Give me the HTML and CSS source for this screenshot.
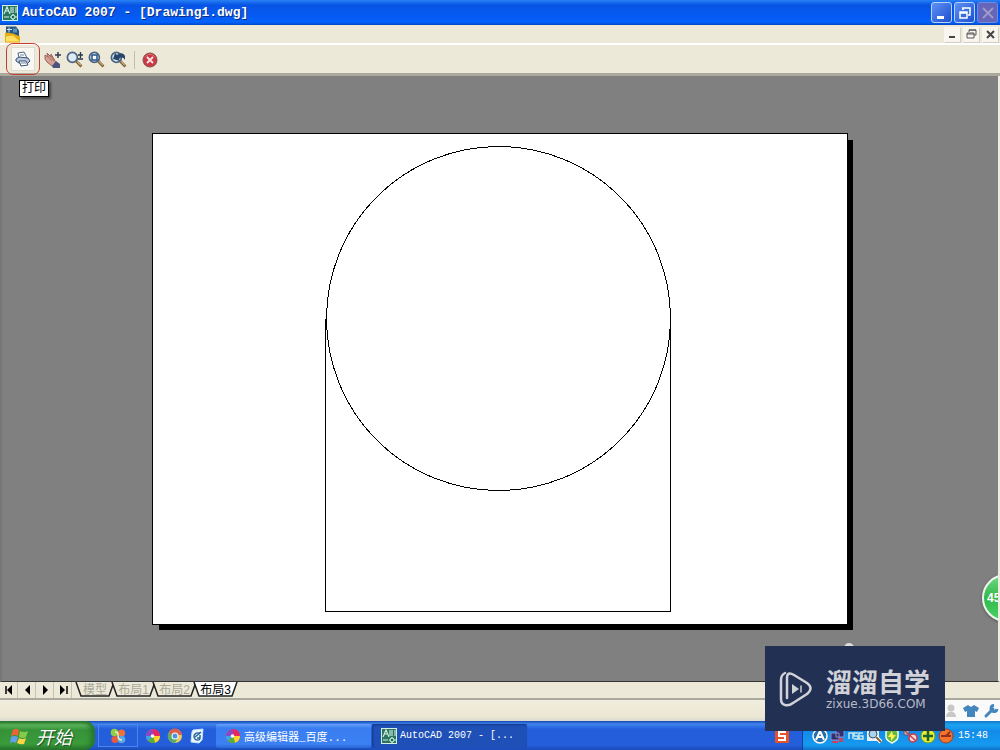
FILE: index.html
```html
<!DOCTYPE html>
<html lang="zh-CN">
<head>
<meta charset="utf-8">
<title>AutoCAD 2007 - [Drawing1.dwg]</title>
<link rel="stylesheet" href="styles.css">
</head>
<body>
<svg class="defs" aria-hidden="true">
  <symbol id="cad" viewBox="0 0 16 16"><path fill="#d3efe0" d="M0 0h16v16H0z"/><path fill="#2b7560" d="M1 1h14v14H1z"/><path d="M2 9 5 2l3 7M3 6h4M9 2v6M11 2v6M14 2v6M2 12h5M8 12h7M11 9v6" fill="none" stroke="#d2efe2" stroke-width="1.1"/><circle cx="11" cy="12" r="2" fill="#17694f" stroke="#e0fff0"/></symbol>
  <symbol id="lens" viewBox="0 0 16 16"><path d="m9.500 9.500 5 5" stroke="#785c32" stroke-width="2.600"/><path d="m9.500 9 4.500 4.500" stroke="#d4b584"/><circle cx="6" cy="6" r="4.700" fill="#dcebf4" stroke="#4a6480" stroke-width="1.600"/></symbol>
  <symbol id="pinwheel" viewBox="0 0 16 16"><circle cx="8" cy="8" r="7" fill="#f05a28"/><path fill="#8a48c8" d="M8 8 1 8A7 7 0 0 1 8 1Z"/><path fill="#e82762" d="M8 8V1a7 7 0 0 1 7 7Z"/><path fill="#ffd329" d="M8 8h7a7 7 0 0 1-5 6.700Z"/><path fill="#4cb33f" d="m8 8 2 6.700A7 7 0 0 1 3 13Z"/><path fill="#39a5eb" d="m8 8-5 5a7 7 0 0 1-2-5Z"/><circle cx="7.500" cy="8" r="1.800" fill="#fff"/></symbol>
</svg>
<div class="window">
  <header class="titlebar">
    <svg class="i16"><use href="#cad"/></svg>
    <h1 class="title">AutoCAD 2007 - [Drawing1.dwg]</h1>
    <div class="winbtns">
      <button class="winbtn" aria-label="最小化"><svg class="i16" viewBox="0 0 16 16"><path fill="#fff" d="M3 11h7v3H3z"/></svg></button>
      <button class="winbtn" aria-label="还原"><svg class="i16" viewBox="0 0 16 16"><path d="M6 5V3h7v7h-2M5 3h8" fill="none" stroke="#fff" stroke-width="1.500"/><path d="M3 7h7v6H3zM3 8h7" fill="none" stroke="#fff" stroke-width="1.500"/></svg></button>
      <button class="winbtn off" aria-label="关闭" disabled><svg class="i16" viewBox="0 0 16 16"><path d="m3 3 10 10M13 3 3 13" stroke="#a39ac5" stroke-width="1.800"/></svg></button>
    </div>
  </header>
  <div class="menubar">
    <svg class="doc" viewBox="0 0 16 16"><path fill="#29557e" d="M1 0h10l3 4v8H1z"/><path d="M2 3h5M4 1v5" stroke="#cfe5f5"/><path fill="#5b95bd" d="M8 2h4v4H8z"/><path fill="#e8ae12" d="m0 6 8 1 7 3v6H0z"/><path fill="#ffe062" d="m1 10 7-1 7 6H1z"/></svg>
    <div class="mdibtns">
      <button class="mdibtn" aria-label="最小化文档"><svg class="i12" viewBox="0 0 12 12"><path fill="#444" d="M3 8h6v2H3z"/></svg></button>
      <button class="mdibtn" aria-label="还原文档"><svg class="i12" viewBox="0 0 12 12"><path d="M4 4V2h7v5H9M4 2h7M2 5h7v5H2zM2 6h7" fill="none" stroke="#555"/></svg></button>
      <button class="mdibtn" aria-label="关闭文档"><svg class="i12" viewBox="0 0 12 12"><path d="m3 3 7 7M10 3 3 10" stroke="#444" stroke-width="2"/></svg></button>
    </div>
  </div>
  <div class="toolbar">
    <div class="marked">
      <button class="tool print" aria-describedby="tip"><svg class="i16" viewBox="0 0 16 16"><path d="m4 7-1-5 6-1 3 6" fill="#fff" stroke="#536686"/><path d="m1 8 3-2 9 1 2 3-3 3-8-1-3-2z" fill="#b9c8dc" stroke="#394f75"/><path d="M4 10h7l2 4-7 1z" fill="#fff" stroke="#394f75"/><path d="M5 4h4M6 12h5" stroke="#6d82a1"/></svg></button>
      <span class="tip" id="tip" role="tooltip">打印</span>
    </div>
    <div class="tools">
      <button class="tool" aria-label="平移"><svg class="i18" viewBox="0 0 18 18"><path d="m1 4 3 2-1-4 4 4V3l3 5 2 4-4 3-5-4-2-3z" fill="#d9a092" stroke="#98675f"/><path d="m3 4 5 6M6 4l4 6" stroke="#a97167"/><path fill="#4c5580" d="m12 10 4 3v4H9l-1-2z"/><path d="M11 4h6M14 1v6" stroke="#343b50" stroke-width="1.500"/></svg></button>
      <button class="tool" aria-label="缩放"><svg class="i18" viewBox="0 0 18 18"><use href="#lens" width="17" height="17"/><path d="M12 4h5M14.500 1v6M12 8h5" stroke="#26364b" stroke-width="1.300"/></svg></button>
      <button class="tool" aria-label="窗口缩放"><svg class="i18" viewBox="0 0 18 18"><use href="#lens" width="17" height="17"/><path d="M4 4h5v5H4z" fill="#fff" stroke="#24548b" stroke-width="1.500"/></svg></button>
      <button class="tool" aria-label="缩放为原窗口"><svg class="i18" viewBox="0 0 18 18"><use href="#lens" width="17" height="17"/><path d="m3 8 2-6 2 2c3-3 7-2 8 1v4c-2-3-4-3-6-1l1 2z" fill="#28476d"/></svg></button>
      <span class="sep"></span>
      <button class="tool" aria-label="关闭预览"><svg class="i16" viewBox="0 0 16 16"><circle cx="8" cy="8" r="7" fill="#c83b46" stroke="#8e4a4c"/><path d="M3 5a6 6 0 0 1 10 0" fill="none" stroke="#dc6b73"/><path d="m5 5 6 6m0-6-6 6" stroke="#fbe3e3" stroke-width="1.800"/></svg></button>
    </div>
  </div>
  <main class="canvas">
    <svg class="paper" viewBox="0 0 694 490" role="img" aria-label="图纸预览"><g fill="none" stroke="#000" stroke-width="1"><circle cx="345.500" cy="184.500" r="172"/><path d="M172.500 185V477.500H517.500V185"/></g></svg>
    <div class="ball">45</div>
    <svg class="peek" viewBox="0 0 26 8"><circle cx="6" cy="7" r="5" fill="#ddd"/><path d="M16 6h6" stroke="#aaa"/></svg>
  </main>
  <nav class="tabs">
    <div class="arrows">
      <button class="arrow" aria-label="第一个"><svg class="i12" viewBox="0 0 12 12"><path d="M3 2v8" stroke="#000" stroke-width="1.500"/><path d="M9 1v10L4 6z"/></svg></button>
      <button class="arrow" aria-label="上一个"><svg class="i12" viewBox="0 0 12 12"><path d="M9 1v10L4 6z"/></svg></button>
      <button class="arrow" aria-label="下一个"><svg class="i12" viewBox="0 0 12 12"><path d="M4 1v10l5-5z"/></svg></button>
      <button class="arrow" aria-label="最后一个"><svg class="i12" viewBox="0 0 12 12"><path d="M3 1v10l5-5z"/><path d="M10 2v8" stroke="#000" stroke-width="1.500"/></svg></button>
    </div>
    <button class="tab short"><svg class="shape" viewBox="0 0 40 15" preserveAspectRatio="none"><path d="m1 0 5 14h28l5-14"/></svg><span>模型</span></button>
    <button class="tab"><svg class="shape" viewBox="0 0 45 15" preserveAspectRatio="none"><path d="m1 0 5 14h33l5-14"/></svg><span>布局1</span></button>
    <button class="tab"><svg class="shape" viewBox="0 0 45 15" preserveAspectRatio="none"><path d="m1 0 5 14h33l5-14"/></svg><span>布局2</span></button>
    <button class="tab active"><svg class="shape" viewBox="0 0 45 15" preserveAspectRatio="none"><path d="m1 0 5 14h33l5-14"/></svg><span>布局3</span></button>
  </nav>
  <div class="status">
    <div class="ime">
      <svg class="i16" viewBox="0 0 16 16"><circle cx="8" cy="5" r="3.500" fill="#c8c8c8"/><path fill="#c8c8c8" d="M3 14c0-7 10-7 10 0z"/></svg>
      <svg class="i16" viewBox="0 0 16 16"><path fill="#4286bd" d="m5 2 3 2 3-2 5 3-2 4-2-1v6H4V8L2 9 0 5z"/></svg>
      <svg class="i16" viewBox="0 0 16 16"><path d="m3 13 7-7" stroke="#4286bd" stroke-width="3" stroke-linecap="round"/><path fill="none" stroke="#4286bd" stroke-width="3" d="M11 2.500a3 3 0 1 0 3 3.500"/></svg>
    </div>
  </div>
  <footer class="taskbar">
    <button class="start"><svg class="i20" viewBox="0 0 20 20"><path fill="#f06432" d="M3 4q3-2 6 0L8 10q-3-2-7 0z"/><path fill="#85cb4a" d="M10 5q4 2 8 0l-2 6q-3 2-7 0z"/><path fill="#63a0ee" d="M1 11q3-2 7 0l-2 6q-3-2-6 0z"/><path fill="#fbd345" d="M9 12q3 2 7 0l-2 6q-3 1-7-1z"/></svg><span>开始</span></button>
    <button class="pinned" aria-label="快捷程序"><svg class="i16" viewBox="0 0 16 16"><circle cx="4.500" cy="4.500" r="3.800" fill="#8fcd48"/><circle cx="11.500" cy="5" r="3.600" fill="#f0703a"/><circle cx="5" cy="11.500" r="3.600" fill="#e95842"/><circle cx="11.500" cy="11.500" r="3.800" fill="#57a8e8"/><path d="M5 4q4 0 3 4 0 4 4 4" fill="none" stroke="#f4edb0" stroke-width="1.500"/></svg></button>
    <div class="quick">
      <button class="plain" aria-label="浏览器"><svg class="i16"><use href="#pinwheel"/></svg></button>
      <button class="plain" aria-label="Chrome"><svg class="i16" viewBox="0 0 16 16"><circle cx="8" cy="8" r="7" fill="#e8cb68"/><path fill="#d9604f" d="M2 4a7 7 0 0 1 13 3H8L5 10z"/><path fill="#5bab68" d="M2 4a7 7 0 0 0 6 11l3-5H6z"/><circle cx="8" cy="8" r="3.500" fill="#fff"/><circle cx="8" cy="8" r="2.500" fill="#5191d5"/></svg></button>
      <button class="plain" aria-label="显示桌面"><svg class="i16" viewBox="0 0 16 16"><path d="m4 2 10-1-1 11-3 3-8-1 1-10z" fill="#eef7ff" stroke="#c4e3f7"/><path d="M11 6a3.500 3.500 0 1 0 0 5M6 9l6-5M8 10h3V7" fill="none" stroke="#28659a" stroke-width="1.500"/></svg></button>
    </div>
    <button class="task"><svg class="i16"><use href="#pinwheel"/></svg><span class="cjk">高级编辑器_百度...</span></button>
    <button class="task current"><svg class="i16"><use href="#cad"/></svg><span>AutoCAD 2007 - [...</span></button>
    <div class="lang"><svg class="i16" viewBox="0 0 16 16"><rect x="1" y="1" width="14" height="14" rx="1" fill="#e4532c"/><path d="M12 4H5v4h6v4H4" fill="none" stroke="#fff" stroke-width="2"/></svg></div>
    <div class="tray">
      <svg class="i16" viewBox="0 0 16 16"><circle cx="8" cy="8" r="7" fill="#286eac" stroke="#fff" stroke-width="1.500"/><path d="m4 12 4-9 4 9M5 9h6" fill="none" stroke="#fff" stroke-width="2"/></svg>
      <svg class="i16" viewBox="0 0 16 16"><path fill="#322f70" stroke="#8990c9" d="M6 1h8v8H6zM1 5h8v7H1z"/><path fill="#c9435e" d="M9 10h4v4H9zM2 13h6v2H2z"/></svg>
      <svg class="i16" viewBox="0 0 16 16"><path d="M1 11V5h4v6M6 11h4V8H6V5h4M15 5h-4v6h4V8h-3" fill="none" stroke="#c4e6ee" stroke-width="1.500"/></svg>
      <svg class="i16" viewBox="0 0 16 16"><path fill="#e9eff2" d="M1 2h12v11H1z"/><circle cx="7" cy="6" r="4" fill="#a9d4ef" stroke="#30566b"/><path d="m10 9 5 5" stroke="#fff" stroke-width="4"/><path d="m10 9 5 5" stroke="#8c6033" stroke-width="2"/></svg>
      <svg class="i16" viewBox="0 0 16 16"><path d="M8 1 14 3v6c0 3-6 6-6 6S2 12 2 9V3z" fill="#61b942" stroke="#effbe8" stroke-width="1.500"/><path fill="#ffef4f" d="M8 3 4 9h3v4l5-6H9z"/></svg>
      <svg class="i16" viewBox="0 0 16 16"><path d="M2 2h5v5H2zM8 8h5v5H8z" fill="#b1bacb" stroke="#585d7e"/><circle cx="11" cy="10" r="4" fill="#f5d8d6" stroke="#cb3945" stroke-width="1.500"/><path d="m3 3 11 10" stroke="#cb3945" stroke-width="1.500"/></svg>
      <svg class="i16" viewBox="0 0 16 16"><circle cx="8" cy="8" r="7" fill="#edea31" stroke="#65a52a"/><path d="M8 3v10M3 8h10" stroke="#176333" stroke-width="2.500"/></svg>
      <svg class="i16" viewBox="0 0 16 16"><circle cx="8" cy="8" r="7" fill="#f4742c" stroke="#9c3e25"/><path d="M8 8l4-4M3 8h10" fill="none" stroke="#902d1d" stroke-width="1.800"/></svg>
      <time class="clock">15:48</time>
    </div>
  </footer>
  <aside class="brand">
    <svg class="logo" viewBox="0 0 34 36"><g fill="none" stroke="#d0d2d7" stroke-linejoin="round" stroke-linecap="round"><path stroke-width="2.500" d="M8 27V7q0-7 7-3l13 8q7 5 0 11l-14 9q-4 3-8 2-4-1-4-6V9q0-5 4-7"/><path stroke-width="1.500" d="M22 15v6"/></g><path fill="#d0d2d7" d="m13 13 7 5-7 5z"/></svg>
    <div class="words"><strong class="name">溜溜自学</strong><span class="site">zixue.3D66.COM</span></div>
  </aside>
</div>
</body>
</html>
```
FILE: styles.css
```css
* { box-sizing: border-box; }
body { margin: 0; font-family: "Liberation Sans", "Noto Sans CJK SC", sans-serif; font-size: 12px; }
button { margin: 0; padding: 0; border: 0; background: none; color: inherit; font: inherit; }
svg { display: block; flex: none; }
.defs { position: absolute; width: 0; height: 0; }
.i12 { width: 12px; height: 12px; }
.i16 { width: 16px; height: 16px; }
.i18 { width: 18px; height: 18px; }
.i20 { width: 20px; height: 20px; }
.window { position: relative; display: flex; flex-direction: column; height: 100vh; overflow: hidden; background: #ece9d8; }

.titlebar { display: flex; align-items: center; gap: 4px; height: 25px; padding: 0 2px; background: linear-gradient(#2880f4, #0754e5 5px, #055cf4 18px, #0264ff 22px, #0347c5); }
.title { flex: 1; margin: 0; color: #fff; font: bold 13px "Liberation Mono", monospace; text-shadow: 1px 1px #0a2d83; }
.winbtns { display: flex; gap: 2px; }
.winbtn { display: grid; place-items: center; width: 21px; height: 21px; border: 1px solid #b8d2f8; border-radius: 3px; background: linear-gradient(135deg, #5e91f3, #1d50cf); }
.winbtn.off { border-color: #7789da; background: #6366ba; }

.menubar { display: flex; align-items: center; justify-content: space-between; height: 20px; padding: 0 2px 0 5px; border-bottom: 2px solid #fff; }
.doc { width: 16px; height: 17px; }
.mdibtns { display: flex; gap: 3px; }
.mdibtn { display: grid; place-items: center; width: 16px; height: 15px; background: #f7f5ee; box-shadow: 1px 1px #d1cfc4; }

.toolbar { display: flex; align-items: center; gap: 4px; height: 31px; padding: 0 6px; border-bottom: 3px solid #aaa99d; }
.marked { position: relative; display: grid; place-items: center; flex: none; width: 34px; height: 32px; border: 1px solid #c43d36; border-radius: 7px; z-index: 2; }
.tools { display: flex; align-items: center; gap: 4px; padding-top: 2px; }
.tool { display: grid; place-items: center; width: 18px; height: 22px; }
.print { width: 22px; background: #f8f7f2; box-shadow: 0 0 0 1px #dedbd0; }
.tip { position: absolute; top: 36px; left: 12px; padding: 0 2px; border: 1px solid #000; background: #fff; color: #000; line-height: 15px; white-space: nowrap; box-shadow: 2px 2px 2px #444; }
.sep { width: 1px; height: 18px; margin: 0 2px; background: #c2bfae; }

.canvas { position: relative; display: flex; align-items: center; justify-content: center; flex: 1; min-height: 0; overflow: hidden; background: #808080; border-right: 2px solid #eeece2; border-left: 2px solid #777; border-bottom: 1px solid #333; }
.paper { width: 70%; outline: 1px solid #000; background: #fff; box-shadow: 6px 6px #000; max-width: 694px; shape-rendering: crispEdges; }
.ball { position: absolute; right: -32px; bottom: 59px; display: flex; align-items: center; width: 48px; height: 48px; padding-left: 3px; border: 2px solid #eef9ee; border-radius: 50%; background: linear-gradient(#6ed883, #32b849 50%, #47d365); color: #fff; font-size: 12px; font-weight: bold; box-shadow: 0 1px 3px #555; }
.peek { position: absolute; right: 129px; bottom: 32px; width: 26px; height: 8px; }

.tabs { display: flex; height: 18px; border-bottom: 2px solid #aaa99d; }
.arrows { display: flex; margin-right: 3px; }
.arrow { display: grid; place-items: center; width: 18px; height: 16px; border-right: 1px solid #c6c3b4; }
.tab { position: relative; width: 45px; height: 15px; margin-right: -4px; color: #aaa798; font-size: 12px; line-height: 14px; }
.tab.short { width: 40px; }
.tab span { position: relative; }
.tab.active { color: #000; }
.shape { position: absolute; inset: 0; width: 100%; height: 100%; fill: #ece9d8; stroke: #222; stroke-width: 1.5px; }
.active .shape { fill: #fff; }

.status { display: flex; justify-content: flex-end; height: 21px; background: linear-gradient(#f1eddd, #ece7d3 80%, #d8d9d4); }
.ime { display: flex; align-items: center; gap: 4px; width: 60px; padding-left: 3px; background: #fafafa; }

.taskbar { display: flex; align-items: center; height: 29px; color: #fff; font-family: "Liberation Mono", "Noto Sans CJK SC", monospace; font-size: 10px; background: linear-gradient(#1747ae, #3f83ee 3px, #245edb 8px, #245edb 24px, #1b4bb8); }
.start { display: flex; align-items: center; gap: 6px; width: 95px; height: 100%; padding: 0 10px; border-radius: 0 10px 10px 0; background: linear-gradient(#287329, #5bb45a 4px, #369239 9px, #3a9b3b 23px, #24742a); box-shadow: inset -4px 0 5px #27742d; font-size: 18px; font-style: italic; text-shadow: 1px 1px 1px #1b4c20; }
.pinned { display: grid; place-items: center; width: 40px; height: 23px; margin-left: 3px; border: 1px solid #4a87ed; }
.quick { display: flex; gap: 6px; padding: 0 11px 0 7px; }
.task { display: flex; align-items: center; gap: 3px; width: 155px; height: 24px; padding: 0 9px; border-radius: 2px; background: linear-gradient(#6aa2fb, #397df0 4px, #3c81f3 20px, #2867d7); white-space: nowrap; }
.task.current { margin-left: 1px; background: #1e50b8; box-shadow: inset 1px 1px 2px #123785; }
.cjk { font-size: 11px; }
.lang { margin-left: auto; margin-right: 12px; }
.tray { display: flex; align-items: center; gap: 2px; height: 100%; padding: 0 12px 0 9px; border-left: 1px solid #103f9a; background: linear-gradient(#137ac9, #1ba4f2 4px, #128be8 10px, #159af0 24px, #0d72c6); }
.clock { margin-left: 2px; }

.brand { position: absolute; right: 55px; bottom: 19px; display: flex; align-items: center; gap: 13px; width: 180px; height: 85px; padding: 0 14px; background: #223054; color: #d0d2d7; }
.logo { width: 34px; height: 36px; }
.words { display: flex; flex-direction: column; gap: 2px; }
.name { font-family: "Noto Sans CJK SC", sans-serif; font-size: 26px; line-height: 28px; }
.site { color: #b7bbc5; font-family: "DejaVu Sans", sans-serif; font-size: 12px; line-height: 14px; }
```
